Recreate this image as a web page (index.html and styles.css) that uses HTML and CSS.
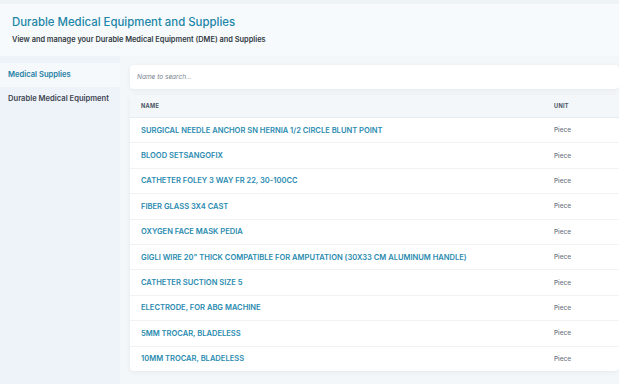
FILE: index.html
```html
<!DOCTYPE html>
<html lang="en">
<head>
    <meta charset="UTF-8">
    <meta name="viewport" content="width=device-width, initial-scale=1.0">
    <title>Durable Medical Equipment and Supplies</title>
    <link rel="stylesheet" href="styles.css">
</head>
<body>
    <div class="top-strip"></div>
    <header class="page-header">
        <h1>Durable Medical Equipment and Supplies</h1>
        <p>View and manage your Durable Medical Equipment (DME) and Supplies</p>
    </header>

    <div class="layout">
        <aside class="sidebar">
            <a class="side-item active">Medical Supplies</a>
            <a class="side-item">Durable Medical Equipment</a>
        </aside>

        <main class="content">
            <input type="text" class="search" placeholder="Name to search...">

            <div class="table-card">
                <table>
                    <thead>
                        <tr>
                            <th>Name</th>
                            <th class="unit-col">Unit</th>
                        </tr>
                    </thead>
                    <tbody>
                        <tr><td class="name">SURGICAL NEEDLE ANCHOR SN HERNIA 1/2 CIRCLE BLUNT POINT</td><td class="unit">Piece</td></tr>
                        <tr><td class="name">BLOOD SETSANGOFIX</td><td class="unit">Piece</td></tr>
                        <tr><td class="name">CATHETER FOLEY 3 WAY FR 22, 30-100CC</td><td class="unit">Piece</td></tr>
                        <tr><td class="name">FIBER GLASS 3X4 CAST</td><td class="unit">Piece</td></tr>
                        <tr><td class="name">OXYGEN FACE MASK PEDIA</td><td class="unit">Piece</td></tr>
                        <tr><td class="name">GIGLI WIRE 20" THICK COMPATIBLE FOR AMPUTATION (30X33 CM ALUMINUM HANDLE)</td><td class="unit">Piece</td></tr>
                        <tr><td class="name">CATHETER SUCTION SIZE 5</td><td class="unit">Piece</td></tr>
                        <tr><td class="name">ELECTRODE, FOR ABG MACHINE</td><td class="unit">Piece</td></tr>
                        <tr><td class="name">5MM TROCAR, BLADELESS</td><td class="unit">Piece</td></tr>
                        <tr><td class="name">10MM TROCAR, BLADELESS</td><td class="unit">Piece</td></tr>
                    </tbody>
                </table>
            </div>
        </main>
    </div>
</body>
</html>
```

FILE: styles.css
```css
body {
    margin: 0;
    font-family: Inter, "Noto Sans", sans-serif;
    background-color: #f4f7fa;
    color: #333;
    overflow: hidden;
}
.top-strip {
    height: 4px;
    background-color: #eef3f6;
}
.page-header {
    background-color: #f7fafc;
    padding: 11px 12px 7px;
    height: 34px;
}
.page-header h1 {
    margin: 0;
    font-size: 11.4px;
    font-weight: 500;
    color: #1b86a8;
}
.page-header p {
    margin: 6px 0 0;
    font-size: 7.4px;
    font-weight: 600;
    color: #333a44;
}
.layout {
    display: flex;
    align-items: flex-start;
}
.sidebar {
    width: 120px;
    flex-shrink: 0;
    min-height: 330px;
    background-color: #eef3f9;
    padding-top: 7px;
    display: flex;
    flex-direction: column;
}
.side-item {
    height: 24px;
    line-height: 24px;
    padding-left: 8px;
    font-size: 7.6px;
    font-weight: 600;
    color: #3e4552;
}
.side-item.active {
    background-color: #f6f9fc;
    color: #1f80a3;
}
.content {
    width: 489px;
    flex-shrink: 0;
    padding: 7px 0 0 10px;
}
.search {
    box-sizing: border-box;
    width: 100%;
    height: 24px;
    border: none;
    border-radius: 4px;
    padding: 0 7px;
    background-color: #fff;
    box-shadow: 0 1px 4px rgba(30, 60, 90, 0.08);
    font-family: inherit;
    font-size: 6.5px;
    font-style: italic;
}
.search::placeholder {
    color: #7b8591;
}
.table-card {
    margin-top: 6px;
    background-color: #fff;
    border-radius: 4px;
    box-shadow: 0 1px 4px rgba(30, 60, 90, 0.08);
    overflow: hidden;
}
table {
    width: 100%;
    border-collapse: collapse;
}
th {
    height: 22px;
    padding: 0 11px;
    text-align: left;
    background-color: #f3f7fa;
    border-bottom: 1px solid #e6edf2;
    font-size: 5.6px;
    font-weight: 700;
    letter-spacing: 0.3px;
    text-transform: uppercase;
    color: #4b5563;
}
td {
    height: 24.4px;
    padding: 0 11px;
    border-bottom: 1px solid #f0f3f6;
}
tbody tr:last-child td {
    border-bottom: none;
}
td.name {
    font-size: 7.55px;
    font-weight: 600;
    color: #2a8bb0;
}
.unit-col,
td.unit {
    width: 54px;
}
td.unit {
    font-size: 6.4px;
    font-weight: 500;
    color: #6b7280;
}
```
